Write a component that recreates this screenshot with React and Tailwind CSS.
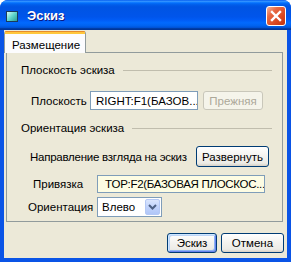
import React from 'react';

const btn =
  "flex items-center justify-center rounded-[3px] border border-[#003c74] bg-[linear-gradient(180deg,#ffffff_0%,#f3f2ee_50%,#ecebe6_85%,#d6d0c5_100%)] text-black whitespace-nowrap";

export default function App() {
  return (
    <div className="w-[291px] h-[262px] font-['Liberation_Sans',Arial,sans-serif] text-[11.5px] leading-[14px] text-black">
      <div className="w-full h-full flex flex-col rounded-t-[8px] bg-[#0a54e6] overflow-hidden">
        {/* ── Barra de título ── */}
        <div className="h-[30px] shrink-0 flex items-center pl-[6px] pr-[5px] bg-[linear-gradient(180deg,#0058ee_0%,#3593ff_4%,#288eff_6%,#127dff_8%,#036ffc_10%,#0262ee_14%,#0057e5_20%,#0054e3_24%,#0055eb_56%,#005bf5_66%,#026afe_76%,#0062ef_86%,#0052d6_92%,#0040ab_94%,#003092_100%)]">
          <div className="w-[12px] h-[11px] mt-[2px] border border-[#1b3a5a] bg-[linear-gradient(135deg,#d8fbf6,#5fd6cc_50%,#2a9c95)]" />
          <span className="ml-[9px] mt-[1px] text-white font-bold text-[13px] [text-shadow:1px_1px_0_#0a1883]">Эскиз</span>
          <div className="ml-auto mt-[1px] w-[20px] h-[20px] rounded-[3px] border border-white flex items-center justify-center bg-[linear-gradient(135deg,#f6b49c_0%,#e86a44_30%,#d8451f_70%,#c0330d_100%)]">
            <svg width="12" height="12" viewBox="0 0 12 12">
              <path d="M2 2 L10 10 M10 2 L2 10" stroke="white" strokeWidth="2.4" strokeLinecap="square" />
            </svg>
          </div>
        </div>

        {/* ── Corpo ── */}
        <div className="flex-1 mx-[4px] mb-[4px] bg-[#ece9d8] flex flex-col">
          {/* Aba */}
          <div className="h-[22px] flex items-end">
            <div className="relative z-10 -mb-px w-[82px] h-[22px] rounded-t-[3px] border-x border-[#919b9c] bg-[#fcfcfe] flex flex-col">
              <div className="h-px bg-[#e68b2c] rounded-t-[3px]" />
              <div className="h-[2px] bg-[#ffc73c]" />
              <span className="pl-[7px] mt-[4px] whitespace-nowrap">Размещение</span>
            </div>
          </div>

          {/* Painel */}
          <div className="ml-[2px] mr-[4px] h-[170px] border border-[#919b9c] flex flex-col whitespace-nowrap">
            <div className="mt-[10px] h-[14px] flex items-center pl-[14px] pr-[10px]">
              <span>Плоскость эскиза</span>
              <div className="flex-1 ml-[8px] h-px bg-[#c0bdad]" />
            </div>

            <div className="mt-[14px] h-[19px] flex items-center">
              <span className="w-[83px] shrink-0 pl-[24px]">Плоскость</span>
              <div className="w-[108px] h-[19px] border border-[#7f9db9] bg-white flex items-center pl-[5px] overflow-hidden">
                RIGHT:F1(БАЗОВ...
              </div>
              <div className="ml-[5px] w-[60px] h-[19px] rounded-[3px] border border-[#c9c7ba] bg-[#f5f4ea] text-[#aca899] flex items-center justify-center">
                Прежняя
              </div>
            </div>

            <div className="mt-[11px] h-[14px] flex items-center pl-[14px] pr-[10px]">
              <span>Ориентация эскиза</span>
              <div className="flex-1 ml-[8px] h-px bg-[#c0bdad]" />
            </div>

            <div className="mt-[11px] h-[21px] flex items-center">
              <span className="w-[189px] shrink-0 pl-[23px] tracking-[-0.25px]">Направление взгляда на эскиз</span>
              <div className={`${btn} w-[73px] h-[21px]`}>Развернуть</div>
            </div>

            <div className="mt-[8px] h-[18px] flex items-center">
              <span className="w-[90px] shrink-0 pl-[26px]">Привязка</span>
              <div className="w-[168px] h-[18px] border border-[#7f9db9] bg-[#fdfce3] flex items-center pl-[7px] overflow-hidden tracking-[-0.3px]">
                TOP:F2(БАЗОВАЯ ПЛОСКОС...
              </div>
            </div>

            <div className="mt-[4px] h-[20px] flex items-center">
              <span className="w-[90px] shrink-0 pl-[21px]">Ориентация</span>
              <div className="w-[65px] h-[20px] border border-[#7f9db9] bg-white flex items-center">
                <span className="pl-[4px] flex-1">Влево</span>
                <div className="w-[15px] h-[16px] mr-px rounded-[2px] border border-[#b4c8f5] bg-[linear-gradient(180deg,#dbe6fe,#c1d3fb_50%,#b0c6f8)] flex items-center justify-center">
                  <svg width="9" height="6" viewBox="0 0 9 6">
                    <path d="M1 1 L4.5 4.5 L8 1" fill="none" stroke="#4d6185" strokeWidth="2" />
                  </svg>
                </div>
              </div>
            </div>
          </div>

          {/* Botões */}
          <div className="mt-[11px] h-[20px] flex justify-end gap-[4px] mr-[3px]">
            <div className={`${btn} w-[50px] h-[20px] shadow-[inset_1px_1px_0_#cee7ff,inset_-1px_-1px_0_#6982ee,inset_2px_2px_0_#bcd4f6,inset_-2px_-2px_0_#8cb4f2]`}>
              Эскиз
            </div>
            <div className={`${btn} w-[63px] h-[20px]`}>Отмена</div>
          </div>
        </div>
      </div>
    </div>
  );
}
